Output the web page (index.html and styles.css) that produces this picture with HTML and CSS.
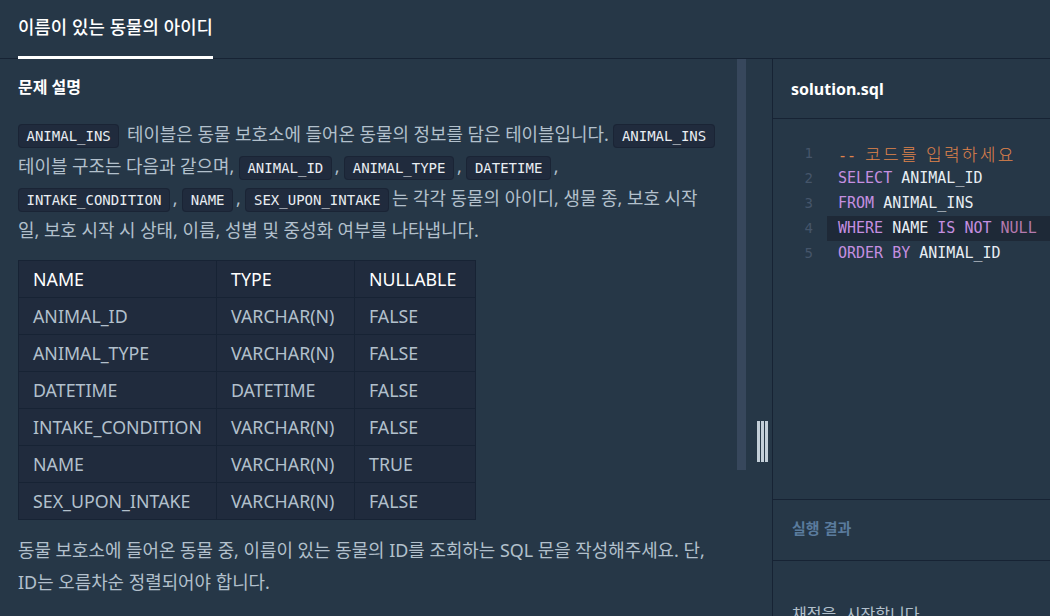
FILE: index.html
```html
<!DOCTYPE html>
<html lang="ko">
<head>
<meta charset="utf-8">
<title>이름이 있는 동물의 아이디</title>
<link rel="stylesheet" href="styles.css">
</head>
<body>
<div class="app">
  <header class="topbar">
    <div class="tab">이름이 있는 동물의 아이디</div>
  </header>
  <main class="main">
    <section class="left">
      <div class="content">
        <h2 class="section-title">문제 설명</h2>
        <p class="desc"><code class="pill">ANIMAL_INS</code> 테이블은 동물 보호소에 들어온 동물의 정보를 담은 테이블입니다. <code class="pill">ANIMAL_INS</code> 테이블 구조는 다음과 같으며, <code class="pill">ANIMAL_ID</code>, <code class="pill">ANIMAL_TYPE</code>, <code class="pill">DATETIME</code>, <code class="pill">INTAKE_CONDITION</code>, <code class="pill">NAME</code>, <code class="pill">SEX_UPON_INTAKE</code>는 각각 동물의 아이디, 생물 종, 보호 시작일, 보호 시작 시 상태, 이름, 성별 및 중성화 여부를 나타냅니다.</p>
        <table class="schema">
          <thead>
            <tr><th class="c1">NAME</th><th class="c2">TYPE</th><th class="c3">NULLABLE</th></tr>
          </thead>
          <tbody>
            <tr><td>ANIMAL_ID</td><td>VARCHAR(N)</td><td>FALSE</td></tr>
            <tr><td>ANIMAL_TYPE</td><td>VARCHAR(N)</td><td>FALSE</td></tr>
            <tr><td>DATETIME</td><td>DATETIME</td><td>FALSE</td></tr>
            <tr><td>INTAKE_CONDITION</td><td>VARCHAR(N)</td><td>FALSE</td></tr>
            <tr><td>NAME</td><td>VARCHAR(N)</td><td>TRUE</td></tr>
            <tr><td>SEX_UPON_INTAKE</td><td>VARCHAR(N)</td><td>FALSE</td></tr>
          </tbody>
        </table>
        <p class="desc after">동물 보호소에 들어온 동물 중, 이름이 있는 동물의 ID를 조회하는 SQL 문을 작성해주세요. 단, ID는 오름차순 정렬되어야 합니다.</p>
      </div>
      <div class="scroll-thumb"></div>
    </section>
    <div class="gutter">
      <div class="handle"><span></span><span></span><span></span></div>
    </div>
    <section class="right">
      <div class="file-head">solution.sql</div>
      <div class="editor">
        <div class="line"><span class="ln">1</span><span class="code"><span class="cm">-- <span class="ko">코드를 입력하세요</span></span></span></div>
        <div class="line"><span class="ln">2</span><span class="code"><span class="kw">SELECT</span> ANIMAL_ID</span></div>
        <div class="line"><span class="ln">3</span><span class="code"><span class="kw">FROM</span> ANIMAL_INS</span></div>
        <div class="line active"><span class="ln">4</span><span class="code"><span class="kw">WHERE</span> NAME <span class="kw">IS NOT</span> <span class="nl">NULL</span></span></div>
        <div class="line"><span class="ln">5</span><span class="code"><span class="kw">ORDER BY</span> ANIMAL_ID</span></div>
      </div>
      <div class="result-head">실행 결과</div>
      <div class="result-body">채점을 시작합니다.</div>
    </section>
  </main>
</div>
</body>
</html>
```

FILE: styles.css
```css
* { box-sizing: border-box; }
html, body { margin: 0; padding: 0; }
body {
  background: #263747;
  color: #b2c0cc;
  font-family: "Noto Sans", "Noto Sans CJK KR", sans-serif;
  width: 1050px;
  height: 616px;
  overflow: hidden;
}
.app {
  display: flex;
  flex-direction: column;
  height: 616px;
}
.topbar {
  height: 59px;
  flex: 0 0 59px;
  border-bottom: 1px solid #172334;
  padding-left: 18px;
  display: flex;
  align-items: flex-end;
}
.tab {
  height: 59px;
  margin-bottom: -1px;
  border-bottom: 3px solid #ffffff;
  color: #ffffff;
  font-family: "Noto Sans CJK KR", sans-serif;
  font-size: 17.8px;
  font-weight: 500;
  line-height: 52px;
}
.main {
  flex: 1;
  display: flex;
  min-height: 0;
}
.left {
  position: relative;
  width: 746px;
  flex: 0 0 746px;
  overflow: hidden;
}
.content {
  padding: 16px 28px 0 18px;
  width: 746px;
}
.section-title {
  margin: 0 0 19px;
  font-size: 16px;
  line-height: 24px;
  font-weight: 700;
  color: #ffffff;
}
.desc {
  margin: 0;
  font-size: 17.9px;
  line-height: 32px;
  color: #b2c0cc;
}
.desc.after { margin-top: 14px; }
.pill {
  font-family: "DejaVu Sans Mono", monospace;
  font-size: 14px;
  line-height: 1;
  color: #e9edf2;
  background: #202b3d;
  border: 1px solid #1a2435;
  border-radius: 4px;
  padding: 3px 7.5px 3px;
  margin: 0 3px 0 0;
}
.schema {
  margin-top: 14px;
  border-collapse: collapse;
  background: #202b3d;
  font-size: 17.8px;
}
.schema th, .schema td {
  border: 1px solid #172334;
  height: 37px;
  padding: 0 14px;
  text-align: left;
  font-weight: 400;
}
.schema th { color: #ffffff; }
.schema td { color: #b2c0cc; }
.schema .c1 { width: 198px; }
.schema .c2 { width: 138px; }
.schema .c3 { width: 121px; }
.scroll-thumb {
  position: absolute;
  top: 0;
  right: 0;
  width: 9px;
  height: 411px;
  background: #37475c;
}
.gutter {
  width: 27px;
  flex: 0 0 27px;
  border-right: 1px solid #172334;
  padding-top: 362px;
  padding-left: 11px;
}
.handle {
  display: flex;
  gap: 1px;
  height: 41px;
}
.handle span {
  width: 3px;
  background: #c3ced8;
}
.right {
  flex: 1;
  display: flex;
  flex-direction: column;
  min-width: 0;
}
.file-head {
  height: 60px;
  flex: 0 0 60px;
  border-bottom: 1px solid #172334;
  padding-left: 18px;
  display: flex;
  align-items: center;
  color: #ffffff;
  font-family: "Noto Sans", sans-serif;
  font-size: 16px;
  font-weight: 700;
}
.editor {
  height: 381px;
  flex: 0 0 381px;
  border-bottom: 1px solid #172334;
  padding-top: 22px;
  font-family: "DejaVu Sans Mono", monospace;
  font-size: 15px;
}
.line {
  display: flex;
  height: 25px;
  line-height: 25px;
  color: #e8eef4;
}
.ln {
  width: 54px;
  flex: 0 0 54px;
  padding-right: 14px;
  text-align: right;
  color: #45556a;
  font-size: 14px;
}
.code {
  flex: 1;
  padding-left: 11px;
  white-space: pre;
}
.line.active .code { background: #1e2937; }
.cm { color: #e0834b; }
.ko {
  font-family: "Noto Sans CJK KR", sans-serif;
  font-size: 17px;
  font-weight: 300;
  letter-spacing: 2.3px;
}
.kw { color: #c58fe0; }
.nl { color: #b57aae; }
.result-head {
  height: 61px;
  flex: 0 0 61px;
  border-bottom: 1px solid #172334;
  padding: 0 0 5px 19px;
  display: flex;
  align-items: center;
  color: #5a7b9d;
  font-family: "Noto Sans CJK KR", sans-serif;
  font-size: 15px;
  font-weight: 700;
}
.result-body {
  padding: 40px 0 0 19px;
  font-family: "DejaVu Sans Mono", "Noto Sans CJK KR", monospace;
  font-size: 16px;
  color: #b2c0cc;
}
```
